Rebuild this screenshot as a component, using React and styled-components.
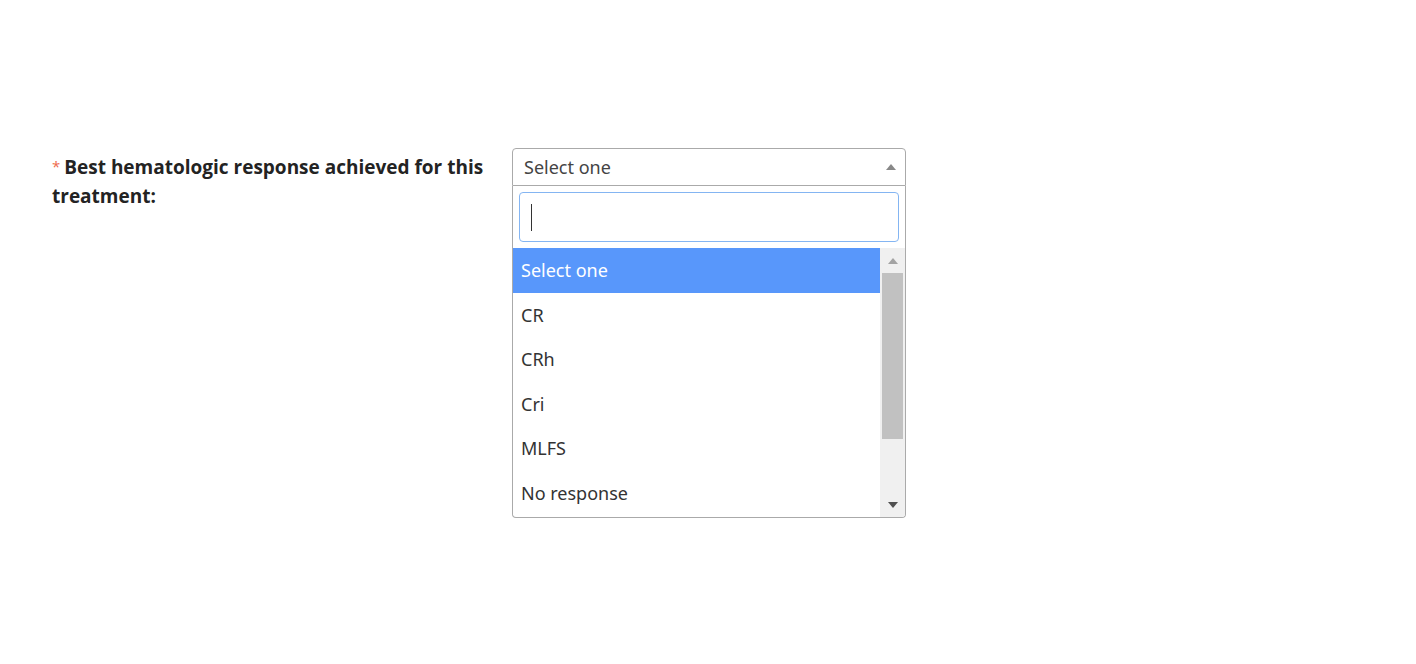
import React from 'react';
import styled, { createGlobalStyle } from 'styled-components';

const GlobalStyle = createGlobalStyle`
  html, body {
    margin: 0;
    padding: 0;
    background: #fff;
  }
  body {
    font-family: "Noto Sans", "Open Sans", Arial, sans-serif;
    color: #333;
  }
`;

const Page = styled.div`
  width: 1416px;
  height: 664px;
  box-sizing: border-box;
  padding: 148px 0 0 52px;
`;

const FormRow = styled.div`
  display: flex;
  align-items: flex-start;
`;

const Label = styled.label`
  width: 460px;
  box-sizing: border-box;
  padding-top: 4px;
  font-family: "Open Sans", "Noto Sans", Arial, sans-serif;
  font-size: 19px;
  font-weight: 700;
  line-height: 29px;
  color: #232323;
`;

const Required = styled.span`
  color: #ee6a4b;
  font-weight: 400;
  font-size: 15px;
  margin-right: 4px;
  vertical-align: 2px;
`;

const SelectWrap = styled.div`
  position: relative;
  width: 394px;
`;

const SelectBox = styled.div`
  height: 38px;
  box-sizing: border-box;
  border: 1px solid #aaa;
  border-radius: 4px 4px 0 0;
  display: flex;
  align-items: center;
  justify-content: space-between;
  padding: 0 9px 0 11px;
  font-size: 18px;
  color: #444;
  background: #fff;
`;

const Arrow = styled.span`
  width: 0;
  height: 0;
  border-left: 5px solid transparent;
  border-right: 5px solid transparent;
  ${p => (p.$up ? 'border-bottom' : 'border-top')}: 6px solid ${p => p.$color || '#888'};
`;

const Dropdown = styled.div`
  position: absolute;
  top: 38px;
  left: 0;
  width: 394px;
  box-sizing: border-box;
  border: 1px solid #aaa;
  border-top: none;
  border-radius: 0 0 4px 4px;
  background: #fff;
  overflow: hidden;
`;

const SearchArea = styled.div`
  padding: 6px;
`;

const SearchInput = styled.div`
  height: 50px;
  box-sizing: border-box;
  border: 1px solid #84b5f2;
  border-radius: 4px;
  display: flex;
  align-items: center;
  padding-left: 11px;
`;

const Caret = styled.span`
  width: 1px;
  height: 27px;
  background: #333;
`;

const ListArea = styled.div`
  display: flex;
  height: 269px;
`;

const Options = styled.ul`
  flex: 1;
  margin: 0;
  padding: 0;
  list-style: none;
  overflow: hidden;
`;

const Option = styled.li`
  height: 44.5px;
  display: flex;
  align-items: center;
  padding-left: 8px;
  font-size: 18px;
  color: ${p => (p.$active ? '#fff' : '#333')};
  background: ${p => (p.$active ? '#5897fb' : '#fff')};
`;

const ScrollTrack = styled.div`
  width: 25px;
  background: #f0f0f0;
  display: flex;
  flex-direction: column;
  align-items: center;
`;

const ScrollButton = styled.div`
  height: 25px;
  width: 100%;
  display: flex;
  align-items: center;
  justify-content: center;
`;

const Thumb = styled.div`
  width: 21px;
  height: 166px;
  background: #c1c1c1;
`;

const Spacer = styled.div`
  flex: 1;
`;

const options = ['Select one', 'CR', 'CRh', 'Cri', 'MLFS', 'No response'];

export default function App() {
  return (
    <Page>
      <GlobalStyle />
      <FormRow>
        <Label>
          <Required>*</Required>
          Best hematologic response achieved for this treatment:
        </Label>
        <SelectWrap>
          <SelectBox>
            <span>Select one</span>
            <Arrow $up />
          </SelectBox>
          <Dropdown>
            <SearchArea>
              <SearchInput>
                <Caret />
              </SearchInput>
            </SearchArea>
            <ListArea>
              <Options>
                {options.map((o, i) => (
                  <Option key={o} $active={i === 0}>
                    {o}
                  </Option>
                ))}
              </Options>
              <ScrollTrack>
                <ScrollButton>
                  <Arrow $up $color="#a3a3a3" />
                </ScrollButton>
                <Thumb />
                <Spacer />
                <ScrollButton>
                  <Arrow $color="#505050" />
                </ScrollButton>
              </ScrollTrack>
            </ListArea>
          </Dropdown>
        </SelectWrap>
      </FormRow>
    </Page>
  );
}
